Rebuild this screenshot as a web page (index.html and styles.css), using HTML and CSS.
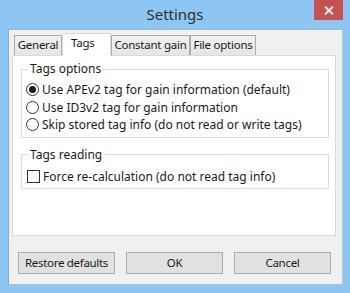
FILE: index.html
```html
<!DOCTYPE html>
<html lang="en">
<head>
  <meta charset="UTF-8">
  <title>Settings</title>
  <link rel="stylesheet" href="styles.css">
</head>
<body>

  <div class="window">
    <!-- Title bar -->
    <div class="titlebar">
      <span class="title">Settings</span>
      <div class="close">
        <svg width="10" height="9" viewBox="0 0 10 9">
          <path d="M1 0.5 L9 8.5 M9 0.5 L1 8.5" stroke="#fff" stroke-width="1.8"/>
        </svg>
      </div>
    </div>

    <div class="client">
      <!-- Tabs -->
      <div class="tabs">
        <div class="tab tab-general">General</div>
        <div class="tab tab-tags active">Tags</div>
        <div class="tab tab-gain">Constant gain</div>
        <div class="tab tab-file">File options</div>
      </div>

      <div class="panel">
        <fieldset class="group group-options">
          <legend>Tags options</legend>
          <div class="row"><span class="radio checked"></span>Use APEv2 tag for gain information (default)</div>
          <div class="row"><span class="radio"></span>Use ID3v2 tag for gain information</div>
          <div class="row"><span class="radio"></span>Skip stored tag info (do not read or write tags)</div>
        </fieldset>

        <fieldset class="group group-reading">
          <legend>Tags reading</legend>
          <div class="row"><span class="check"></span>Force re-calculation (do not read tag info)</div>
        </fieldset>
      </div>

      <div class="buttons">
        <div class="btn">Restore defaults</div>
        <div class="btn">OK</div>
        <div class="btn">Cancel</div>
      </div>
    </div>
  </div>

</body>
</html>
```

FILE: styles.css
```css
body {
  margin: 0;
  background-color: #8ec6f3;
  font-family: 'Noto Sans', 'DejaVu Sans', sans-serif;
  font-size: 12px;
  color: #000;
}

.window {
  width: 350px;
  height: 293px;
  display: flex;
  flex-direction: column;
}

.titlebar {
  height: 29px;
  position: relative;
  display: flex;
  justify-content: center;
  align-items: center;
}

.title {
  font-size: 15px;
  color: #2e2e2e;
  margin-top: -1px;
}

.close {
  position: absolute;
  top: 0;
  left: 314px;
  width: 29px;
  height: 20px;
  background: #c75050;
  display: flex;
  justify-content: center;
  align-items: center;
}

.client {
  margin: 0 7px 0 8px;
  height: 256px;
  box-sizing: border-box;
  background: #f0f0f0;
  border: 1px solid #a9c6e0;
  border-left-color: #93a9bd;
  border-top-color: #9fb6cb;
}

/* tabs */
.tabs {
  display: flex;
  align-items: flex-end;
  height: 22px;
  margin: 3px 0 0 5px;
  position: relative;
  z-index: 1;
}

.tab {
  box-sizing: border-box;
  height: 20px;
  border: 1px solid #acacac;
  border-bottom: none;
  background: linear-gradient(#f0f0f0, #e5e5e5);
  text-align: center;
  line-height: 18px;
  white-space: nowrap;
  font-size: 11.5px;
  letter-spacing: -0.25px;
  color: #1a1a1a;
}

.tab.active {
  height: 23px;
  margin-bottom: -1px;
  background: #fff;
  border-color: #d9d9d9;
  line-height: 18px;
  text-align: left;
  padding-left: 8px;
}

.tab-general { width: 48px; }
.tab-tags { width: 49px; }
.tab-gain { width: 79px; }
.tab-file { width: 66px; }

.panel {
  margin-left: 3px;
  width: 324px;
  height: 181px;
  box-sizing: border-box;
  background: #fff;
  border: 1px solid #d9d9d9;
  padding: 5px 6px 0 8px;
}

.group {
  margin: 0;
  border: 1px solid #dcdcdc;
  padding: 4px 0 3px 4px;
}

.group legend {
  padding: 0 2px;
  margin-left: 2px;
  line-height: 16px;
  color: #1a1a1a;
}

.group-reading {
  margin-top: 9px;
  padding-top: 5px;
}

.row {
  height: 17.5px;
  display: flex;
  align-items: center;
  color: #1a1a1a;
}

.radio {
  box-sizing: border-box;
  width: 13px;
  height: 13px;
  border: 1px solid #333;
  border-radius: 50%;
  background: #fff;
  margin-right: 3px;
  display: flex;
  justify-content: center;
  align-items: center;
}

.radio.checked::after {
  content: "";
  width: 7px;
  height: 7px;
  border-radius: 50%;
  background: #1a1a1a;
}

.check {
  box-sizing: border-box;
  width: 13px;
  height: 13px;
  border: 1px solid #333;
  background: #fff;
  margin: 0 3px 0 1px;
}

/* bottom buttons */
.buttons {
  display: flex;
  gap: 11px;
  margin: 16px 0 0 9px;
}

.btn {
  box-sizing: border-box;
  width: 97px;
  height: 22px;
  background: #e1e1e1;
  border: 1px solid #adadad;
  text-align: center;
  line-height: 20px;
  font-size: 11.5px;
  letter-spacing: -0.3px;
  color: #1a1a1a;
}
```
